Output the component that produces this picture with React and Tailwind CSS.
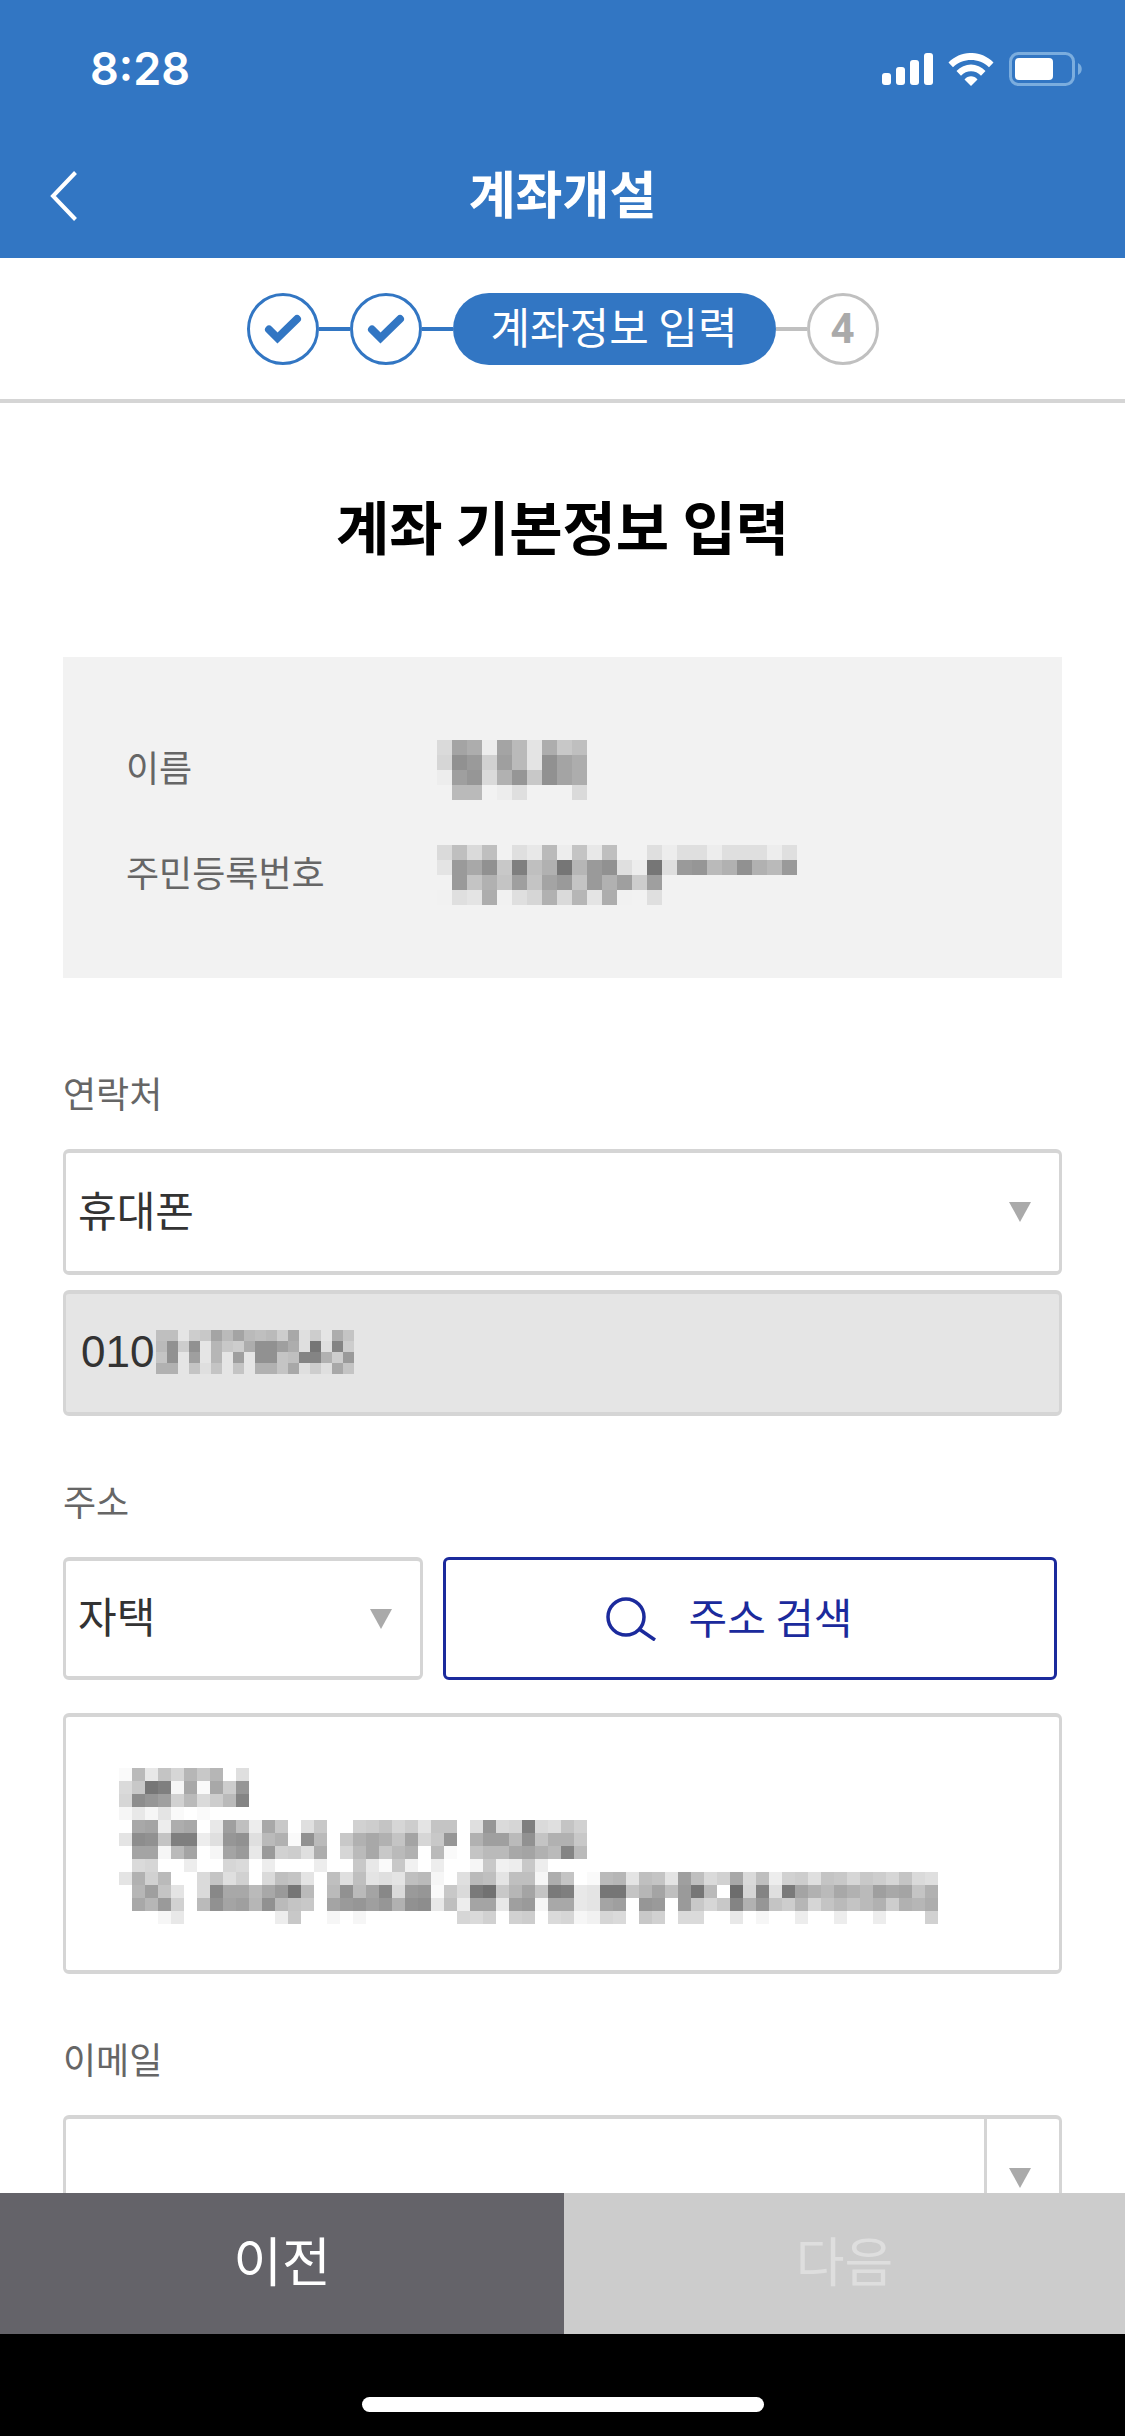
import React from "react";

const grey = (c) => {
  const v = Math.round((parseInt(c, 36) / 35) * 160 + 95);
  return `rgb(${v},${v},${v})`;
};

/* Each character is the lightness of one cell, 0 (dark) to z (white); a dot is empty. */
function Mosaic({ rows, cell, label }) {
  const cols = Math.max(...rows.map((r) => r.length));
  return (
    <svg role="img" aria-label={label} width={cols * cell} height={rows.length * cell} shapeRendering="crispEdges" className="block shrink-0">
      {rows.flatMap((row, y) =>
        [...row].map((c, x) =>
          c === "." ? null : <rect key={`${x}-${y}`} x={x * cell} y={y * cell} width={cell} height={cell} fill={grey(c)} />
        )
      )}
    </svg>
  );
}

const NAME = ["rfhvfkthnl", "qbdpektbfh", "vecricnbfh", ".kk.vs...r"];
const REGISTRATION = [
  "rlrl.sukvmul..svssvsssvs",
  "tdgbn7li5jdbsv5sdckibikd",
  ".dmimemfdmdieoe",
  "wsthwsqirjthw.s",
];
const PHONE = ["ll.onfkfklkogso.hm", "kbob.jnohbbehs5s8o", "mb.e.j.e.bbml88iod", "ii.msm.m.iimgsosgm"];
const ADDRESS = [
  "ykumqjnj.s",
  "rn57xgygoc",
  "qacepkrok8",
  "xuxty.y..z",
  "zgfvhg.uelvgn.sn..pomqotmm.scrq7rsmp",
  "tabm77vscbskiybk.nigimfqnc.ieekbmiin",
  "zffxkf.xfdudposh.qkgnkizky.mkkgfik8k",
  ".rq..v..qr.v...v.znuynw.v..xnwvnv",
  "tipk..rmspzrlmt.lsltstlkx.skltllxhm.ykjtlmtelrpgrlvposmnqnoqmrs",
  ".jemt.r9ggkgd5k.kbkf9rdcynr64njfm67ut55mjfld5k.3q8s6fikgikegfmi",
  ".gjdp.kbfejbkmnzfdcecibaulvffuedxggutfe.cdzdnqn8icmojqmkmkioijh",
  "...xu..zzz..vnz.xzx......zqrp.pozrqxwqr.np.rr..uzx..v..v..v...p",
];

const Arrow = () => (
  <svg aria-hidden="true" viewBox="0 0 22 20" className="pointer-events-none h-5 w-[22px] fill-[#aaaaaa]">
    <path d="M0 0h22L11 20z" />
  </svg>
);

const boxClass = "rounded-md border-x-3 border-y-4 border-[#d5d5d5]";

function Select({ id, value, className }) {
  return (
    <div className={`relative flex items-center ${className}`}>
      <select id={id} className={`h-full w-full appearance-none bg-white px-3 pb-2 text-[42px] text-[#333333] ${boxClass}`}>
        <option>{value}</option>
      </select>
      <div className="pointer-events-none absolute right-[31px]"><Arrow /></div>
    </div>
  );
}

const Done = () => (
  <li aria-label="완료" className="flex size-[72px] items-center justify-center rounded-full border-3 border-[#3276c3]">
    <svg aria-hidden="true" viewBox="0 0 38 30" className="h-[30px] w-[38px] fill-none stroke-[#3276c3] stroke-[8]" strokeLinecap="round" strokeLinejoin="miter">
      <path d="M5 15.500L13.500 24L33 5" />
    </svg>
  </li>
);

const labelClass = "block text-4xl leading-[54px] text-[#666666]";
const termClass = "flex h-[60px] items-center pb-2";

export default function App() {
  return (
    <div className="flex h-screen flex-col bg-white font-['Noto_Sans_CJK_KR',sans-serif] text-black">
      <header className="shrink-0 bg-[#3276c3] text-white">
        <div className="flex h-[138px] items-center justify-between pr-[43px] pl-[90px]">
          <span className="font-['Inter',sans-serif] text-[45px] font-semibold">8:28</span>
          <div className="flex items-center gap-[15px]">
            <svg aria-hidden="true" viewBox="0 0 51 32" className="h-8 w-[51px] fill-white">
              <rect x="0" y="20" width="9" height="12" rx="3" />
              <rect x="14" y="14" width="9" height="18" rx="3" />
              <rect x="28" y="7" width="9" height="25" rx="3" />
              <rect x="42" y="0" width="9" height="32" rx="3" />
            </svg>
            <svg aria-hidden="true" viewBox="0 0 46 33" className="h-[33px] w-[46px] fill-white">
              <path d="M0.500 9.500C13-3.200 33-3.200 45.500 9.500L41 14.200C31 4.700 15 4.700 5 14.200z" />
              <path d="M8.500 18C16.500 9.200 29.500 9.200 37.500 18L33 22.700C27.500 16.800 18.500 16.800 13 22.700z" />
              <path d="M16.500 26.500C20 22.300 26 22.300 29.500 26.500L23 33z" />
            </svg>
            <svg aria-hidden="true" viewBox="0 0 73 34" className="h-[34px] w-[73px]">
              <rect x="1.500" y="1.500" width="63" height="31" rx="8" fill="none" stroke="#7badde" strokeWidth="3" />
              <rect x="6" y="6" width="38" height="22" rx="4" fill="white" />
              <path d="M69 11C74 13.500 74 20.500 69 23z" fill="#7badde" />
            </svg>
          </div>
        </div>
        <div className="grid h-[120px] grid-cols-[1fr_auto_1fr] items-center px-[50px] pb-1">
          <button type="button" aria-label="뒤로" className="w-fit">
            <svg aria-hidden="true" viewBox="0 0 27 50" className="h-[50px] w-[27px] fill-none stroke-white stroke-4">
              <path d="M25.500 1.500L3 25L25.500 48.500" />
            </svg>
          </button>
          <h1 className="pb-2 text-[51px] leading-[72px] font-bold">계좌개설</h1>
        </div>
      </header>

      <nav aria-label="진행 단계" className="flex h-[145px] shrink-0 items-center justify-center border-b-4 border-[#d5d5d5]">
        <ol className="flex items-center">
          <Done />
          <li aria-hidden="true" className="h-1 w-[31px] bg-[#3276c3]" />
          <Done />
          <li aria-hidden="true" className="h-1 w-[31px] bg-[#3276c3]" />
          <li aria-current="step" className="flex h-[72px] items-center rounded-full bg-[#3276c3] px-[38px] pb-1.5 text-[43px] leading-none text-white">계좌정보 입력</li>
          <li aria-hidden="true" className="h-1 w-[31px] bg-[#c0c0c0]" />
          <li className="flex size-[72px] items-center justify-center rounded-full border-3 border-[#c0c0c0] font-['Roboto',sans-serif] text-[42px] font-bold text-[#aaaaaa]">4</li>
        </ol>
      </nav>

      <main className="min-h-0 flex-1 overflow-y-auto px-[63px] [scrollbar-width:none]">
        <h2 className="pt-20 pb-[90px] text-center text-[58px] leading-[84px] font-bold">계좌 기본정보 입력</h2>

        <dl className="grid grid-cols-[311px_1fr] gap-y-[45px] bg-[#f2f2f2] px-[63px] pt-[83px] pb-[73px] text-4xl text-[#666666]">
          <dt className={termClass}>이름</dt>
          <dd className="h-[60px]"><Mosaic rows={NAME} cell={15} label="가려진 이름" /></dd>
          <dt className={termClass}>주민등록번호</dt>
          <dd className="h-[60px]"><Mosaic rows={REGISTRATION} cell={15} label="가려진 주민등록번호" /></dd>
        </dl>

        <label htmlFor="contact" className={`${labelClass} pt-[87px]`}>연락처</label>
        <Select id="contact" value="휴대폰" className="mt-[30px] h-[126px]" />
        <div className={`mt-[15px] flex h-[126px] items-center bg-[#e5e5e5] pb-0.5 pl-[15px] ${boxClass}`}>
          <input aria-label="휴대폰 번호" readOnly value="010" className="w-[75px] font-['Liberation_Sans',sans-serif] text-[44px] text-[#333333]" />
          <Mosaic rows={PHONE} cell={11} label="가려진 번호" />
        </div>

        <label htmlFor="place" className={`${labelClass} pt-[57px]`}>주소</label>
        <div className="mt-[30px] flex h-[123px] gap-5 pr-[5px]">
          <Select id="place" value="자택" className="w-[360px]" />
          <button type="button" className="flex flex-1 items-center justify-center gap-[33px] rounded-md border-3 border-[#1b2a9c] pr-[42px] text-[42px] text-[#1b2a9c]">
            <svg aria-hidden="true" viewBox="0 0 50 45" className="h-[45px] w-[50px] fill-none stroke-[#1b2a9c] stroke-[3.5]">
              <circle cx="20" cy="21" r="18" />
              <path d="M33 33L49 44" />
            </svg>
            <span className="pb-1.5">주소 검색</span>
          </button>
        </div>
        <div className={`mt-[33px] px-[53px] pt-[51px] pb-[46px] ${boxClass}`}>
          <Mosaic rows={ADDRESS} cell={13} label="가려진 주소" />
        </div>

        <label htmlFor="email" className={`${labelClass} pt-[57px]`}>이메일</label>
        <div className={`mt-[30px] flex h-[126px] ${boxClass}`}>
          <input id="email" type="email" className="min-w-0 flex-1 px-3 text-[42px] text-[#333333]" />
          <button type="button" aria-label="이메일 도메인 선택" className="flex w-[75px] items-center justify-center border-l-3 border-[#d5d5d5] pr-1.5"><Arrow /></button>
        </div>
      </main>

      <footer className="shrink-0">
        <div className="grid h-[141px] grid-cols-[564fr_561fr] text-[53px]">
          <button type="button" className="bg-[#646369] pb-2 text-white">이전</button>
          <button type="button" disabled className="bg-[#cccccc] pb-2 text-[#dedede]">다음</button>
        </div>
        <div className="flex h-[102px] items-end justify-center bg-black pb-6">
          <div className="h-[15px] w-[402px] rounded-full bg-white" />
        </div>
      </footer>
    </div>
  );
}
